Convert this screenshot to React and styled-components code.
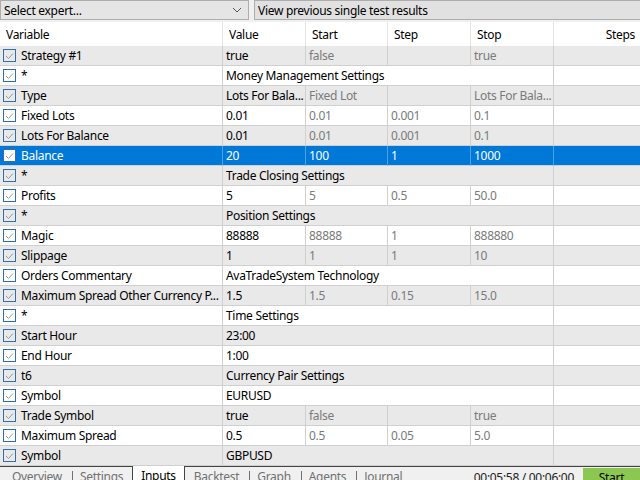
import styled, { createGlobalStyle } from "styled-components";

const GlobalStyle = createGlobalStyle`
  html, body {
    margin: 0;
    padding: 0;
    background: #f0f0f0;
    overflow: hidden;
  }
  body {
    font-family: "Noto Sans", "Open Sans", sans-serif;
    font-size: 12px;
    letter-spacing: -0.3px;
    color: #000;
  }
`;

const rows = [
  { name: "Strategy #1", value: "true", start: "false", step: "", stop: "true" },
  { name: "*", span: "Money Management Settings" },
  { name: "Type", value: "Lots For Bala...", start: "Fixed Lot", step: "", stop: "Lots For Bala..." },
  { name: "Fixed Lots", value: "0.01", start: "0.01", step: "0.001", stop: "0.1" },
  { name: "Lots For Balance", value: "0.01", start: "0.01", step: "0.001", stop: "0.1" },
  { name: "Balance", value: "20", start: "100", step: "1", stop: "1000", selected: true },
  { name: "*", span: "Trade Closing Settings" },
  { name: "Profits", value: "5", start: "5", step: "0.5", stop: "50.0" },
  { name: "*", span: "Position Settings" },
  { name: "Magic", value: "88888", start: "88888", step: "1", stop: "888880" },
  { name: "Slippage", value: "1", start: "1", step: "1", stop: "10" },
  { name: "Orders Commentary", span: "AvaTradeSystem Technology" },
  { name: "Maximum Spread Other Currency P...", value: "1.5", start: "1.5", step: "0.15", stop: "15.0" },
  { name: "*", span: "Time Settings" },
  { name: "Start Hour", span: "23:00" },
  { name: "End Hour", span: "1:00" },
  { name: "t6", span: "Currency Pair Settings" },
  { name: "Symbol", span: "EURUSD" },
  { name: "Trade Symbol", value: "true", start: "false", step: "", stop: "true" },
  { name: "Maximum Spread", value: "0.5", start: "0.5", step: "0.05", stop: "5.0" },
  { name: "Symbol", span: "GBPUSD" },
];

const tabs = ["Overview", "Settings", "Inputs", "Backtest", "Graph", "Agents", "Journal"];

function App() {
  return (
    <>
      <GlobalStyle />
      <Page>
        <TopBar>
          <Combo>
            <span>Select expert...</span>
            <svg width="10" height="6" viewBox="0 0 10 6">
              <path d="M1 1 L5 5 L9 1" fill="none" stroke="#555" strokeWidth="1" />
            </svg>
          </Combo>
          <ResultsButton>View previous single test results</ResultsButton>
        </TopBar>

        <Grid>
          <HeadCell>Variable</HeadCell>
          <HeadCell>Value</HeadCell>
          <HeadCell>Start</HeadCell>
          <HeadCell>Step</HeadCell>
          <HeadCell>Stop</HeadCell>
          <HeadCell $right>Steps</HeadCell>

          {rows.map((r, i) => {
            const shade = r.selected ? "sel" : i % 2 === 0 ? "gray" : "white";
            return (
              <Row key={i} $shade={shade}>
                <Cell>
                  <Check $sel={r.selected}>
                    <svg width="9" height="8" viewBox="0 0 9 8">
                      <path d="M1 4 L3.5 6.5 L8 1.5" fill="none" stroke="#9a9a9a" strokeWidth="1" />
                    </svg>
                  </Check>
                  {r.name}
                </Cell>
                {r.span ? (
                  <Cell $span={4}>{r.span}</Cell>
                ) : (
                  <>
                    <Cell>{r.value}</Cell>
                    <Cell $dim>{r.start}</Cell>
                    <Cell $dim>{r.step}</Cell>
                    <Cell $dim>{r.stop}</Cell>
                  </>
                )}
                <Cell />
              </Row>
            );
          })}
        </Grid>

        <BottomBar>
          <Tabs>
            {tabs.map((t, i) => (
              <Tab key={t} $active={t === "Inputs"} $sep={i > 0 && t !== "Inputs" && tabs[i - 1] !== "Inputs"}>
                {t}
              </Tab>
            ))}
          </Tabs>
          <Timer>00:05:58 / 00:06:00</Timer>
          <StartButton>Start</StartButton>
        </BottomBar>
      </Page>
    </>
  );
}

const Page = styled.div`
  width: 640px;
  height: 480px;
  display: flex;
  flex-direction: column;
  overflow: hidden;
`;

const TopBar = styled.div`
  display: flex;
  gap: 5px;
  height: 20px;
  margin-bottom: 2px;
  flex: none;
`;

const Combo = styled.div`
  box-sizing: border-box;
  width: 249px;
  height: 20px;
  background: #e5e5e5;
  border: 1px solid #adadad;
  display: flex;
  align-items: center;
  justify-content: space-between;
  padding: 0 6px 0 3px;
`;

const ResultsButton = styled.div`
  box-sizing: border-box;
  flex: 1;
  height: 20px;
  background: #e1e1e1;
  border: 1px solid #adadad;
  border-right: none;
  display: flex;
  align-items: center;
  padding-left: 3px;
`;

const Grid = styled.div`
  display: grid;
  grid-template-columns: 222px 83px 82px 83px 83px 1fr;
  grid-template-rows: 24px;
  grid-auto-rows: 20px;
  background: #fff;
  flex: none;
`;

const HeadCell = styled.div`
  height: 24px;
  box-sizing: border-box;
  display: flex;
  align-items: center;
  justify-content: ${(p) => (p.$right ? "flex-end" : "flex-start")};
  padding: 0 5px 0 6px;
  border-left: 1px solid #e5e5e5;
  background: #fff;
  &:first-child {
    border-left: none;
  }
`;

const shades = {
  gray: { bg: "#e9e9e9", line: "#d0d0d0", fg: "#000", dim: "#7a7a7a" },
  white: { bg: "#ffffff", line: "#d0d0d0", fg: "#000", dim: "#7a7a7a" },
  sel: { bg: "#0078d7", line: "#4da1e3", fg: "#fff", dim: "#fff" },
};

const Row = styled.div`
  display: contents;
  & > div {
    background: ${(p) => shades[p.$shade].bg};
    color: ${(p) => shades[p.$shade].fg};
    border-bottom: 1px solid #d0d0d0;
    border-left: 1px solid ${(p) => shades[p.$shade].line};
  }
  & > div[data-dim="1"] {
    color: ${(p) => shades[p.$shade].dim};
  }
  & > div:first-child {
    border-left: none;
  }
`;

const Cell = styled.div.attrs((p) => ({ "data-dim": p.$dim ? "1" : "0" }))`
  box-sizing: border-box;
  height: 20px;
  display: flex;
  align-items: center;
  padding-left: 3px;
  white-space: nowrap;
  overflow: hidden;
  grid-column: span ${(p) => p.$span || 1};
`;

const Check = styled.span`
  box-sizing: border-box;
  width: 13px;
  height: 13px;
  margin-right: 5px;
  border: 1px solid #2f6fb0;
  background: ${(p) => (p.$sel ? "#fff" : "transparent")};
  display: flex;
  align-items: center;
  justify-content: center;
  flex: none;
`;

const BottomBar = styled.div`
  display: flex;
  align-items: flex-start;
  height: 22px;
  flex: none;
  border-top: 1px solid #444;
  background: #f0f0f0;
`;

const Tabs = styled.div`
  display: flex;
  padding-left: 3px;
`;

const Tab = styled.div`
  position: relative;
  display: flex;
  align-items: flex-start;
  padding-top: 1px;
  color: ${(p) => (p.$active ? "#000" : "#707070")};
  background: ${(p) => (p.$active ? "#fff" : "transparent")};
  margin-top: ${(p) => (p.$active ? "-1px" : "0")};
  height: ${(p) => (p.$active ? "19px" : "18px")};
  border-left: 1px solid ${(p) => (p.$active ? "#444" : "transparent")};
  border-right: 1px solid ${(p) => (p.$active ? "#444" : "transparent")};
  padding-left: 8px;
  padding-right: 8px;
  &::before {
    content: "";
    display: ${(p) => (p.$sep ? "block" : "none")};
    position: absolute;
    left: 0;
    top: 4px;
    width: 1px;
    height: 14px;
    background: #707070;
  }
`;

const Timer = styled.div`
  margin-left: auto;
  margin-right: 9px;
  padding-top: 2px;
  color: #222;
`;

const StartButton = styled.div`
  width: 57px;
  height: 20px;
  margin-top: 1px;
  background: #8cc751;
  display: flex;
  justify-content: center;
  padding-top: 1px;
  box-sizing: border-box;
`;

export default App;
